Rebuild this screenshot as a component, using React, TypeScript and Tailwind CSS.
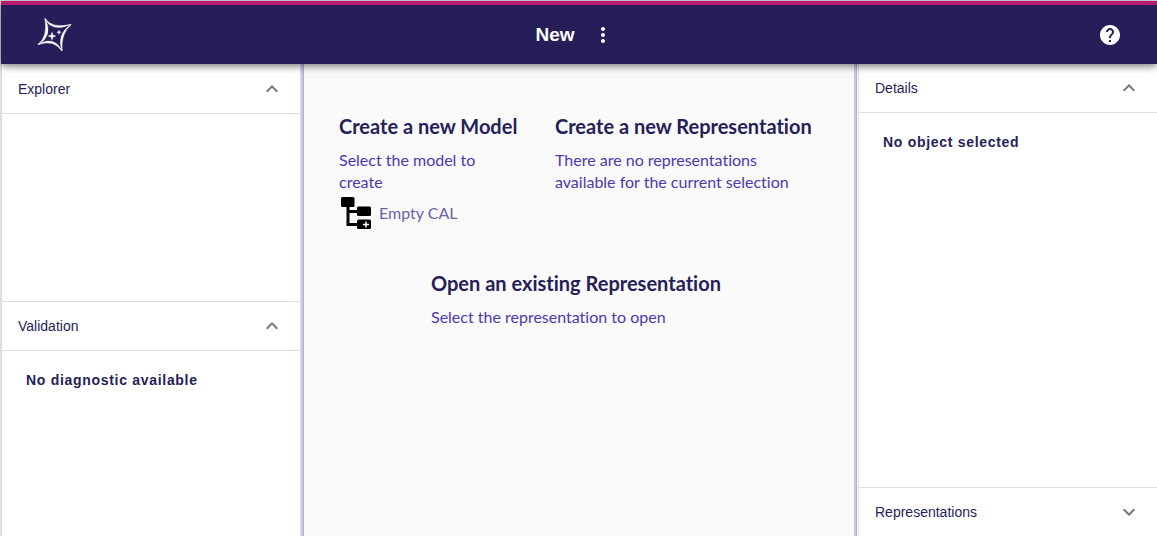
import type { ReactNode } from "react";

const UP = "M12 8l-6 6 1.41 1.41L12 10.83l4.59 4.58L18 14z";
const DOWN = "M16.59 8.59L12 13.17 7.41 8.59 6 10l6 6 6-6z";

function SectionHeader({ title, expanded = true }: { title: string; expanded?: boolean }) {
  return (
    <button
      type="button"
      aria-expanded={expanded}
      className="flex h-12 w-full shrink-0 items-center justify-between px-4 text-left text-sm text-[#261e58]"
    >
      <span>{title}</span>
      <svg viewBox="0 0 24 24" className="size-6 fill-[#757575]" aria-hidden="true">
        <path d={expanded ? UP : DOWN} />
      </svg>
    </button>
  );
}

function Message({ children }: { children: ReactNode }) {
  return <p className="px-6 py-[19px] text-sm font-bold tracking-wider">{children}</p>;
}

function Logo() {
  return (
    <svg viewBox="0 0 40 40" className="size-10" aria-hidden="true">
      <g fill="#fff" stroke="#fff" strokeWidth="0.6" strokeLinejoin="round">
        <path d="M12 3.500Q19 14 38 9.500Q18 17.500 12 3.500Z" />
        <path d="M38 9.500Q27.500 19 29 36Q23.500 19 38 9.500Z" />
        <path d="M29 36Q21 24 5 29.500Q21.500 20 29 36Z" />
        <path d="M5 29.500Q15 22 12 3.500Q20.500 21 5 29.500Z" />
        <path d="M19 17.500l.9 2.700 2.700.9-2.700.9-.9 2.700-.9-2.700-2.700-.9 2.700-.9z" />
        <path d="M26 15l.8 1.500 1.500.8-1.500.8-.8 1.500-.8-1.500-1.500-.8 1.500-.8z" fillOpacity="0.9" strokeOpacity="0.3" />
      </g>
    </svg>
  );
}

function ModelIcon() {
  return (
    <svg viewBox="0 0 32 32" className="size-8" aria-hidden="true">
      <rect x="2" y="0" width="13.500" height="10" rx="1.500" />
      <rect x="18" y="9.500" width="14" height="9.500" rx="1.500" />
      <rect x="18" y="22.500" width="14" height="9.500" rx="1.500" />
      <path d="M9 8v19.500h10M9 14.500h10" fill="none" stroke="#000" strokeWidth="3" />
      <path d="M27 24.500v6M24 27.500h6" stroke="#fff" strokeWidth="1.500" />
    </svg>
  );
}

type CardProps = { title: string; text: string; width: string; children?: ReactNode };

function Card({ title, text, width, children }: CardProps) {
  return (
    <section className={`w-min ${width}`}>
      <h2 className="text-xl font-bold whitespace-nowrap">{title}</h2>
      <p className="mt-[9px] text-base leading-[22px] text-[#4d38b0]">{text}</p>
      {children}
    </section>
  );
}

export default function App() {
  return (
    <div className="flex h-screen flex-col border-t border-l border-[#e0e0e0] bg-white font-['Liberation_Sans',sans-serif] text-[#261e58]">
      <header className="z-10 grid h-[63px] shrink-0 grid-cols-3 items-center border-t-4 border-[#b81a70] bg-[#261e58] px-8 text-white shadow-[0_2px_8px_rgba(0,0,0,0.55)]">
        <a href="#home" aria-label="Home" className="justify-self-start">
          <Logo />
        </a>
        <div className="flex items-center justify-center gap-4 pr-2">
          <h1 className="text-[19px] leading-7 font-bold">New</h1>
          <button type="button" aria-label="More">
            <svg viewBox="0 0 24 24" className="size-6 fill-white" aria-hidden="true">
              <path d="M12 8c1.100 0 2-.9 2-2s-.9-2-2-2-2 .9-2 2 .9 2 2 2zm0 2c-1.100 0-2 .9-2 2s.9 2 2 2 2-.9 2-2-.9-2-2-2zm0 6c-1.100 0-2 .9-2 2s.9 2 2 2 2-.9 2-2-.9-2-2-2z" />
            </svg>
          </button>
        </div>
        <a href="#help" aria-label="Help" className="justify-self-end pr-[3px]">
          <svg viewBox="0 0 24 24" className="size-6 fill-white" aria-hidden="true">
            <path d="M12 2C6.480 2 2 6.480 2 12s4.480 10 10 10 10-4.480 10-10S17.520 2 12 2zm1 17h-2v-2h2v2zm2.070-7.750l-.9.920C13.450 12.900 13 13.500 13 15h-2v-.5c0-1.100.45-2.100 1.170-2.830l1.240-1.260c.37-.36.59-.86.59-1.410 0-1.100-.9-2-2-2s-2 .9-2 2H8c0-2.210 1.790-4 4-4s4 1.790 4 4c0 .88-.36 1.680-.93 2.250z" />
          </svg>
        </a>
      </header>
      <div className="flex min-h-0 flex-1">
        <aside className="grid w-[300px] shrink-0 grid-rows-2 border-x border-[#dedede] pt-px">
          <section className="flex flex-col">
            <SectionHeader title="Explorer" />
            <div className="flex-1 border-t border-[#dedede]" />
          </section>
          <section className="flex flex-col border-t border-[#dedede]">
            <SectionHeader title="Validation" />
            <div className="flex-1 border-t border-[#dedede]">
              <Message>No diagnostic available</Message>
            </div>
          </section>
        </aside>
        <div className="w-[3px] shrink-0 border-r border-[#b3a9e1] bg-[#cdc6ec]" />
        <main className="flex min-w-0 flex-1 flex-col items-center gap-10 bg-[#fafafa] pt-12 font-['Lato',sans-serif] [font-variant-ligatures:none]">
          <div className="flex gap-9">
            <Card title="Create a new Model" text="Select the model to create" width="min-w-45">
              <button type="button" className="mt-1 flex items-center gap-2 text-base whitespace-nowrap text-[#6b63a5]">
                <ModelIcon />
                Empty CAL
              </button>
            </Card>
            <Card
              title="Create a new Representation"
              text="There are no representations available for the current selection"
              width="min-w-66"
            />
          </div>
          <Card
            title="Open an existing Representation"
            text="Select the representation to open"
            width="min-w-74"
          />
        </main>
        <div className="mr-px w-[3px] shrink-0 border-r border-[#b3a9e1] bg-[#cdc6ec]" />
        <aside className="flex w-[299px] shrink-0 flex-col border-l border-[#dedede]">
          <SectionHeader title="Details" />
          <div className="flex-1 border-y border-[#dedede]">
            <Message>No object selected</Message>
          </div>
          <SectionHeader title="Representations" expanded={false} />
        </aside>
      </div>
    </div>
  );
}
